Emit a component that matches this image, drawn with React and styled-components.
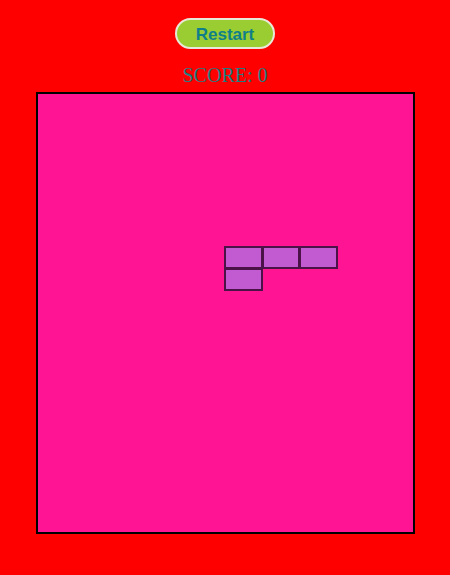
import React from 'react';
import styled, { createGlobalStyle } from 'styled-components';

const GlobalStyle = createGlobalStyle`
  html, body {
    margin: 0;
    padding: 0;
    background-color: #ff0000;
  }
`;

const Wrapper = styled.div`
  display: flex;
  flex-direction: column;
  align-items: center;
  padding-top: 18px;
`;

const RestartButton = styled.button`
  width: 100px;
  height: 31px;
  border: 2px solid #e8e8d8;
  border-radius: 16px;
  background-color: #9acd32;
  color: #0f7f8a;
  font-family: 'Liberation Sans', Arial, sans-serif;
  font-weight: bold;
  font-size: 17px;
  line-height: 27px;
  padding: 1px 0 0;
  cursor: pointer;
`;

const Score = styled.div`
  margin-top: 15px;
  color: #1d7c80;
  font-family: 'Liberation Serif', 'Times New Roman', serif;
  font-size: 20px;
  line-height: 23px;
`;

const Board = styled.div`
  margin-top: 5px;
  width: 375px;
  height: 438px;
  border: 2px solid #000;
  background-color: #ff1493;
  display: grid;
  grid-template-columns: repeat(10, 1fr);
  grid-template-rows: repeat(20, 1fr);
`;

const Cell = styled.div`
  grid-column: ${(p) => p.$col + 1};
  grid-row: ${(p) => p.$row + 1};
  background-color: #c25bd2;
  border: 2px solid #4a1247;
  box-sizing: border-box;
  margin-left: -1px;
  margin-top: -1px;
`;

const piece = [
  [5, 7],
  [6, 7],
  [7, 7],
  [5, 8],
];

export default function App() {
  return (
    <>
      <GlobalStyle />
      <Wrapper>
        <RestartButton>Restart</RestartButton>
        <Score>SCORE: 0</Score>
        <Board>
          {piece.map(([c, r]) => (
            <Cell key={`${c}-${r}`} $col={c} $row={r} />
          ))}
        </Board>
      </Wrapper>
    </>
  );
}
